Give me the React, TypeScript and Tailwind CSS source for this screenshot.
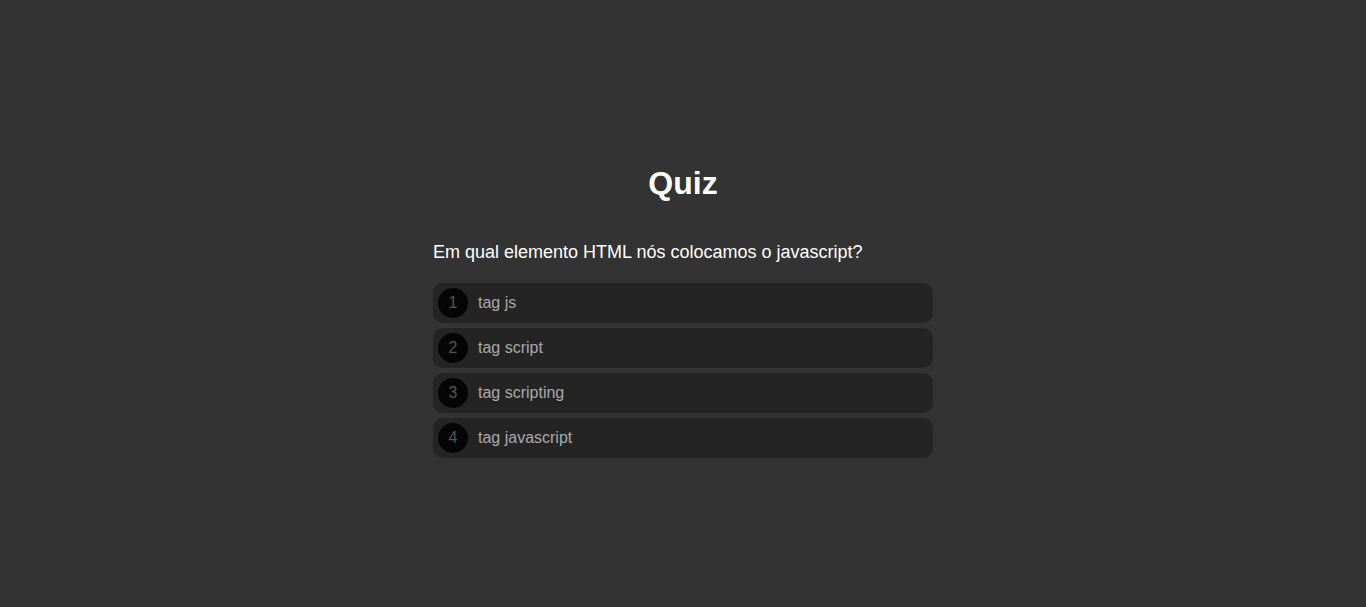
const options = ["tag js", "tag script", "tag scripting", "tag javascript"];

export default function App() {
  return (
    <div
      className="min-h-screen bg-[#333333] pt-[165px]"
      style={{ fontFamily: '"Liberation Sans", Arial, sans-serif' }}
    >
      <div className="mx-auto w-[500px]">
        <h1 className="text-center text-[32px] font-bold leading-[37px] text-white">Quiz</h1>
        <p className="mt-[40px] text-[18px] leading-[21px] text-white">
          Em qual elemento HTML nós colocamos o javascript?
        </p>
        <div className="mt-[20px] flex flex-col gap-[5px]">
          {options.map((opt, i) => (
            <div key={opt} className="flex h-[40px] items-center rounded-[10px] bg-[#242424] px-[5px]">
              <span className="flex h-[30px] w-[30px] items-center justify-center rounded-full bg-[#050505] text-[16px] text-[#555555]">
                {i + 1}
              </span>
              <span className="ml-[10px] text-[16px] text-[#aaaaaa]">{opt}</span>
            </div>
          ))}
        </div>
      </div>
    </div>
  );
}
